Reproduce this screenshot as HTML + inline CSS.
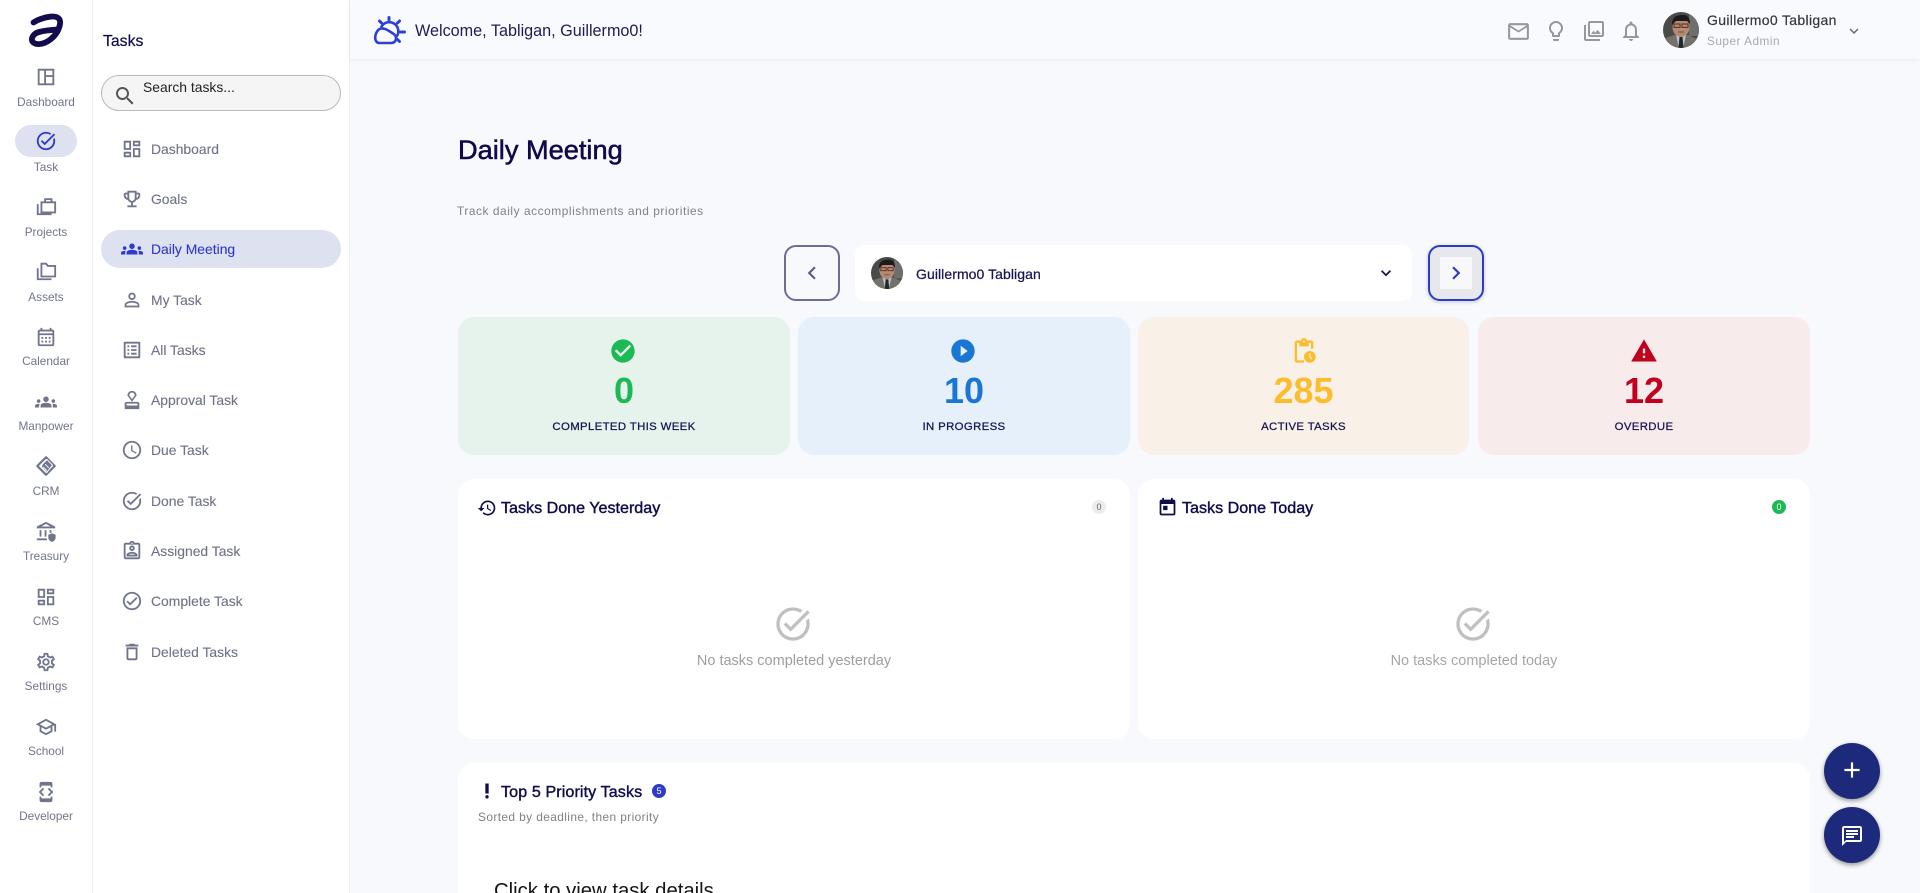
<!DOCTYPE html>
<html lang="en"><head><meta charset="utf-8"><title>Daily Meeting</title>
<style>
html,body{margin:0;padding:0;width:1920px;height:893px;overflow:hidden;background:#f8f9fd;font-family:"Liberation Sans",Arial,sans-serif}
#p{position:relative;width:1920px;height:893px;overflow:hidden}
.a,svg.i,.t{position:absolute}
svg{display:block}
svg.i{fill:currentColor}
.t{white-space:nowrap;line-height:20px;height:20px}
.m{-webkit-text-stroke:.3px currentColor}
.rl{left:0;width:92px;text-align:center;font-size:11.8px;color:#71758a}
.rc{color:#71758b}
.ml{left:151px;font-size:13.9px;color:#6f7388;-webkit-text-stroke:.12px currentColor}
.c{color:#71758b}
.card{position:absolute;top:317px;height:138px;border-radius:16px}
.num{position:absolute;left:0;right:0;top:370px;text-align:center;font-size:36px;line-height:42px;font-weight:bold}
.lab{position:absolute;left:0;right:0;text-align:center;font-size:11.4px;letter-spacing:.35px;line-height:20px;top:417px;color:#17134f;-webkit-text-stroke:.25px #17134f}
.pan{position:absolute;background:#fff;border-radius:16px}
.h{font-size:16.1px;color:#100b4c;-webkit-text-stroke:.4px #100b4c}
</style></head><body><div id="p">
<svg width="0" height="0" style="position:absolute"><defs>
<clipPath id="cc"><circle cx="18" cy="18" r="18"/></clipPath>
<g id="av"><g clip-path="url(#cc)">
<rect width="36" height="36" fill="#4a4a48"/><rect x="26" y="0" width="10" height="24" fill="#6e6e6c"/>
<path d="M0 36V27L11 23H25L36 28V36Z" fill="#74716b"/>
<path d="M13 23H23L20 36H16Z" fill="#b4c4d6"/><path d="M16.5 25H19.5L20.5 36H15.5Z" fill="#262626"/>
<ellipse cx="18" cy="15" rx="8.5" ry="10" fill="#b38a72"/>
<path d="M9 13C9 5 13 3 20 3C26 3 27 8 27 12L24 9H13Z" fill="#1c1a1a"/>
<rect x="11" y="12" width="6" height="3.4" fill="none" stroke="#5a2a22" stroke-width="1"/><rect x="19" y="12" width="6" height="3.4" fill="none" stroke="#5a2a22" stroke-width="1"/>
<path d="M15 20H21" stroke="#7c4c40" stroke-width="1"/></g></g>
<path id="dash" d="M19 5v2h-4V5h4M9 5v6H5V5h4m10 8v6h-4v-6h4M9 17v2H5v-2h4M21 3h-8v6h8V3zM11 3H3v10h8V3zm10 8h-8v10h8V11zm-10 4H3v6h8v-6z"/>
<path id="talt" d="M22 5.18L10.59 16.6l-4.24-4.24 1.41-1.41 2.83 2.83 10-10L22 5.18zm-2.21 5.04c.13.57.21 1.17.21 1.78 0 4.42-3.58 8-8 8s-8-3.58-8-8 3.58-8 8-8c1.58 0 3.04.46 4.28 1.25l1.44-1.44C16.1 2.67 14.13 2 12 2 6.48 2 2 6.48 2 12s4.48 10 10 10 10-4.48 10-10c0-1.19-.22-2.33-.6-3.39l-1.61 1.61z"/>
<path id="grp" d="M12 12.75c1.63 0 3.07.39 4.24.9 1.08.48 1.76 1.56 1.76 2.73V18H6v-1.61c0-1.18.68-2.26 1.76-2.73 1.17-.52 2.61-.91 4.24-.91zM4 13c1.1 0 2-.9 2-2s-.9-2-2-2-2 .9-2 2 .9 2 2 2zm1.13 1.1c-.37-.06-.74-.1-1.13-.1-.99 0-1.93.21-2.78.58C.48 14.9 0 15.62 0 16.43V18h4.5v-1.61c0-.83.23-1.61.63-2.29zM20 13c1.1 0 2-.9 2-2s-.9-2-2-2-2 .9-2 2 .9 2 2 2zm4 3.43c0-.81-.48-1.53-1.22-1.85-.85-.37-1.79-.58-2.78-.58-.39 0-.76.04-1.13.1.4.68.63 1.46.63 2.29V18H24v-1.57zM12 6c1.66 0 3 1.34 3 3s-1.34 3-3 3-3-1.34-3-3 1.34-3 3-3z"/>
<path id="exp" d="M16.59 8.59L12 13.17 7.41 8.59 6 10l6 6 6-6z"/>
</defs></svg>

<!-- rail -->
<div class="a" style="left:0;top:0;width:92px;height:893px;background:#fff;border-right:1px solid #eeeff3"></div>
<div class="a" style="left:93px;top:0;width:256px;height:893px;background:#fff;border-right:1px solid #eeeff3"></div>
<svg class="a" style="left:0;top:1px" width="92" height="56" viewBox="0 0 92 56"><path d="M33.5 21.5C40 17 62 10 60 23C58 35 46 44 37 43C29 42 31 33 39 31C45 29.500 50 29 57 28.500" fill="none" stroke="#120c4f" stroke-width="5.800" stroke-linecap="round"/></svg>
<div class="a" style="left:15px;top:125px;width:62px;height:32px;border-radius:16px;background:#dde1f0"></div>

<svg class="i rc" style="left:35px;top:66px" width="22" height="22" viewBox="0 0 24 24"><path d="M4 4h16v16H4zM11 4v16M11 11h9" fill="none" stroke="currentColor" stroke-width="2"/></svg>
<svg class="i" style="left:35px;top:130px;color:#2e3bc8" width="22" height="22" viewBox="0 0 24 24"><use href="#talt"/></svg>
<svg class="i rc" style="left:35px;top:195px" width="22" height="22" viewBox="0 0 24 24"><path d="M7 8h15v11H7zM11 8V4.500h7V8M3 10v11h15" fill="none" stroke="currentColor" stroke-width="2"/></svg>
<svg class="i rc" style="left:35px;top:260px" width="22" height="22" viewBox="0 0 24 24"><path d="M7 4h5l2 2.500h8V18H7zM3 9v12h15" fill="none" stroke="currentColor" stroke-width="2"/></svg>
<svg class="i rc" style="left:35px;top:326px" width="22" height="22" viewBox="0 0 24 24"><path d="M19 4h-1V2h-2v2H8V2H6v2H5c-1.100 0-2 .9-2 2v14c0 1.100.9 2 2 2h14c1.100 0 2-.9 2-2V6c0-1.100-.9-2-2-2zm0 16H5V10h14v10zM5 8V6h14v2H5zm2 4h2v2H7zm4 0h2v2h-2zm4 0h2v2h-2zM7 16h2v2H7zm4 0h2v2h-2zm4 0h2v2h-2z"/></svg>
<svg class="i rc" style="left:35px;top:391px" width="22" height="22" viewBox="0 0 24 24"><use href="#grp"/></svg>
<svg class="i rc" style="left:35px;top:455px" width="22" height="22" viewBox="0 0 24 24"><path d="M12 2.500L21.500 12 12 21.500 2.500 12z" fill="none" stroke="currentColor" stroke-width="2.400" stroke-linejoin="round"/><path d="M8 10l5-5 6 6-6 8-6-6zM9 13l4 4M11 10l4 4" fill="currentColor" stroke="#fff" stroke-width="1"/></svg>
<svg class="i rc" style="left:35px;top:521px" width="22" height="22" viewBox="0 0 24 24"><path d="M12 1L2 6v2h20V6zm0 2.200L17 6H7zM5 10v7h2v-7zM10.500 10v7h2v-7zM16 10v3h2v-3zM2 19h11v2H2z"/><path d="M18.500 13.500l4 1.500v3.200c0 2.300-1.800 3.900-4 4.800-2.200-.9-4-2.500-4-4.800V15z"/></svg>
<svg class="i rc" style="left:35px;top:586px" width="22" height="22" viewBox="0 0 24 24"><use href="#dash"/></svg>
<svg class="i rc" style="left:35px;top:651px" width="22" height="22" viewBox="0 0 24 24"><path d="M19.430 12.980c.04-.32.07-.64.07-.98 0-.34-.03-.66-.07-.98l2.110-1.650c.19-.15.24-.42.12-.64l-2-3.460c-.09-.16-.26-.25-.44-.25-.06 0-.12.01-.17.03l-2.490 1c-.52-.4-1.080-.73-1.690-.98l-.38-2.650C14.460 2.180 14.250 2 14 2h-4c-.25 0-.46.18-.49.42l-.38 2.650c-.61.25-1.170.59-1.690.98l-2.490-1c-.06-.02-.12-.03-.18-.03-.17 0-.34.09-.43.25l-2 3.460c-.13.22-.07.49.12.64l2.110 1.650c-.04.32-.07.65-.07.98 0 .33.03.66.07.98l-2.110 1.650c-.19.15-.24.42-.12.64l2 3.460c.09.16.26.25.44.25.06 0 .12-.01.17-.03l2.490-1c.52.4 1.080.73 1.690.98l.38 2.650c.03.24.24.42.49.42h4c.25 0 .46-.18.49-.42l.38-2.650c.61-.25 1.170-.59 1.690-.98l2.490 1c.06.02.12.03.18.03.17 0 .34-.09.43-.25l2-3.460c.12-.22.07-.49-.12-.64l-2.110-1.650zm-1.980-1.710c.04.31.05.52.05.73 0 .21-.02.43-.05.73l-.14 1.130.89.7 1.080.84-.7 1.210-1.270-.51-1.040-.42-.9.68c-.43.32-.84.56-1.250.73l-1.060.43-.16 1.130-.2 1.350h-1.400l-.19-1.350-.16-1.130-1.060-.43c-.43-.18-.83-.41-1.230-.71l-.91-.7-1.060.43-1.270.51-.7-1.210 1.080-.84.89-.7-.14-1.130c-.03-.31-.05-.54-.05-.74s.02-.43.05-.73l.14-1.130-.89-.7-1.080-.84.7-1.210 1.270.51 1.040.42.9-.68c.43-.32.84-.56 1.250-.73l1.060-.43.16-1.130.2-1.350h1.390l.19 1.350.16 1.130 1.060.43c.43.18.83.41 1.230.71l.91.7 1.060-.43 1.270-.51.7 1.210-1.070.85-.89.7.14 1.130zM12 8c-2.210 0-4 1.790-4 4s1.790 4 4 4 4-1.790 4-4-1.790-4-4-4zm0 6c-1.100 0-2-.9-2-2s.9-2 2-2 2 .9 2 2-.9 2-2 2z"/></svg>
<svg class="i rc" style="left:35px;top:716px" width="22" height="22" viewBox="0 0 24 24"><path d="M12 3L1 9l4 2.180v6L12 21l7-3.820v-6l2-1.090V17h2V9L12 3zm6.820 6L12 12.720 5.180 9 12 5.280 18.820 9zM17 15.990l-5 2.730-5-2.730v-3.720L12 15l5-2.730v3.720z"/></svg>
<svg class="i rc" style="left:35px;top:781px" width="22" height="22" viewBox="0 0 24 24"><path d="M7 5h10v2h2V3c0-1.100-.9-1.990-2-1.990L7 1c-1.100 0-2 .9-2 2v4h2V5zm8.410 11.590L20 12l-4.590-4.590L14 8.830 17.170 12 14 15.170l1.410 1.420zM10 15.170L6.830 12 10 8.830 8.590 7.410 4 12l4.590 4.590L10 15.170zM17 19H7v-2H5v4c0 1.100.9 2 2 2h10c1.100 0 2-.9 2-2v-4h-2v2z"/></svg>

<div class="t rl" style="top:92px">Dashboard</div>
<div class="t rl" style="top:157px">Task</div>
<div class="t rl" style="top:222px">Projects</div>
<div class="t rl" style="top:287px">Assets</div>
<div class="t rl" style="top:351px">Calendar</div>
<div class="t rl" style="top:416px">Manpower</div>
<div class="t rl" style="top:481px">CRM</div>
<div class="t rl" style="top:546px">Treasury</div>
<div class="t rl" style="top:611px">CMS</div>
<div class="t rl" style="top:676px">Settings</div>
<div class="t rl" style="top:741px">School</div>
<div class="t rl" style="top:806px">Developer</div>

<!-- tasks panel -->
<div class="t m" style="left:103px;top:32px;font-size:15.800px;color:#100b4c;-webkit-text-stroke:.2px #100b4c">Tasks</div>
<div class="a" style="left:101px;top:75px;width:238px;height:34px;border:1px solid #b9b9b9;border-radius:18px;background:#f5f5f5"></div>
<svg class="i" style="left:113px;top:84px;color:#555" width="24" height="24" viewBox="0 0 24 24"><path d="M15.500 14h-.79l-.28-.27C15.410 12.590 16 11.110 16 9.500 16 5.910 13.090 3 9.500 3S3 5.910 3 9.500 5.910 16 9.500 16c1.610 0 3.090-.59 4.230-1.570l.27.28v.79l5 4.990L20.490 19l-4.990-5zm-6 0C7.010 14 5 11.990 5 9.500S7.010 5 9.500 5 14 7.010 14 9.500 11.990 14 9.500 14z"/></svg>
<div class="t" style="left:143px;top:77px;font-size:13.900px;color:#222">Search tasks...</div>

<div class="a" style="left:101px;top:230px;width:240px;height:38px;border-radius:19px;background:#dde1f0"></div>
<svg class="i c" style="left:121px;top:138px" width="22" height="22" viewBox="0 0 24 24"><use href="#dash"/></svg>
<svg class="i c" style="left:121px;top:188px" width="22" height="22" viewBox="0 0 24 24"><path d="M19 5h-2V3H7v2H5c-1.100 0-2 .9-2 2v1c0 2.550 1.920 4.630 4.390 4.940.63 1.500 1.980 2.630 3.610 2.960V19H7v2h10v-2h-4v-3.100c1.630-.33 2.980-1.460 3.610-2.960C19.080 12.630 21 10.550 21 8V7c0-1.100-.9-2-2-2zM5 8V7h2v3.820C5.840 10.400 5 9.300 5 8zm7 6c-1.650 0-3-1.350-3-3V5h6v6c0 1.650-1.350 3-3 3zm7-6c0 1.300-.84 2.400-2 2.820V7h2v1z"/></svg>
<svg class="i" style="left:121px;top:238px;color:#2e3bc8" width="22" height="22" viewBox="0 0 24 24"><use href="#grp"/></svg>
<svg class="i c" style="left:121px;top:289px" width="22" height="22" viewBox="0 0 24 24"><path d="M12 5.900c1.160 0 2.100.94 2.100 2.100s-.94 2.100-2.100 2.100S9.900 9.160 9.900 8s.94-2.100 2.100-2.100m0 9c2.970 0 6.100 1.460 6.100 2.100v1.100H5.900V17c0-.64 3.130-2.100 6.100-2.100M12 4C9.790 4 8 5.790 8 8s1.790 4 4 4 4-1.790 4-4-1.790-4-4-4zm0 9c-2.670 0-8 1.340-8 4v3h16v-3c0-2.660-5.330-4-8-4z"/></svg>
<svg class="i c" style="left:121px;top:339px" width="22" height="22" viewBox="0 0 24 24"><path d="M19 5v14H5V5h14m1.100-2H3.900c-.5 0-.9.4-.9.9v16.200c0 .4.4.9.9.9h16.200c.4 0 .9-.5.9-.9V3.900c0-.5-.5-.9-.9-.9zM11 7h6v2h-6V7zm0 4h6v2h-6v-2zm0 4h6v2h-6zM7 7h2v2H7zm0 4h2v2H7zm0 4h2v2H7z"/></svg>
<svg class="i c" style="left:121px;top:389px" width="22" height="22" viewBox="0 0 24 24"><path d="M4 16v6h16v-6c0-1.100-.9-2-2-2H6c-1.100 0-2 .9-2 2zm14 2H6v-2h12v2zM12 2C9.240 2 7 4.240 7 7l5 7 5-7c0-2.760-2.240-5-5-5zm0 9L9 7c0-1.660 1.340-3 3-3s3 1.340 3 3l-3 4z"/></svg>
<svg class="i c" style="left:121px;top:439px" width="22" height="22" viewBox="0 0 24 24"><path d="M11.990 2C6.470 2 2 6.480 2 12s4.470 10 9.990 10C17.520 22 22 17.520 22 12S17.520 2 11.990 2zM12 20c-4.420 0-8-3.580-8-8s3.580-8 8-8 8 3.580 8 8-3.580 8-8 8zm.5-13H11v6l5.250 3.150.75-1.230-4.500-2.670z"/></svg>
<svg class="i c" style="left:121px;top:490px" width="22" height="22" viewBox="0 0 24 24"><use href="#talt"/></svg>
<svg class="i c" style="left:121px;top:540px" width="22" height="22" viewBox="0 0 24 24"><path d="M19 3h-4.180C14.400 1.840 13.300 1 12 1c-1.300 0-2.400.84-2.820 2H5c-1.100 0-2 .9-2 2v14c0 1.100.9 2 2 2h14c1.100 0 2-.9 2-2V5c0-1.100-.9-2-2-2zm-7-.25c.41 0 .75.34.75.75s-.34.75-.75.75-.75-.34-.75-.75.34-.75.75-.75zM19 19H5V5h14v14zm-7-7c1.650 0 3-1.350 3-3s-1.350-3-3-3-3 1.350-3 3 1.350 3 3 3zm0-4c.55 0 1 .45 1 1s-.45 1-1 1-1-.45-1-1 .45-1 1-1zm6 8.470c0-2.500-3.970-3.580-6-3.580s-6 1.070-6 3.580V18h12v-1.530zM8.310 16c.69-.56 2.380-1.120 3.690-1.120s3.010.56 3.690 1.120H8.310z"/></svg>
<svg class="i c" style="left:121px;top:590px" width="22" height="22" viewBox="0 0 24 24"><path d="M12 2C6.480 2 2 6.480 2 12s4.480 10 10 10 10-4.480 10-10S17.520 2 12 2zm0 18c-4.410 0-8-3.590-8-8s3.590-8 8-8 8 3.590 8 8-3.590 8-8 8zm4.590-12.420L10 14.170l-2.590-2.580L6 13l4 4 8-8z"/></svg>
<svg class="i c" style="left:121px;top:641px" width="22" height="22" viewBox="0 0 24 24"><path d="M6 19c0 1.100.9 2 2 2h8c1.100 0 2-.9 2-2V7H6v12zM8 9h8v10H8V9zm7.500-5l-1-1h-5l-1 1H5v2h14V4z"/></svg>

<div class="t ml" style="top:139px">Dashboard</div>
<div class="t ml" style="top:189px">Goals</div>
<div class="t ml" style="top:239px;color:#2e3bc8">Daily Meeting</div>
<div class="t ml" style="top:290px">My Task</div>
<div class="t ml" style="top:340px">All Tasks</div>
<div class="t ml" style="top:390px">Approval Task</div>
<div class="t ml" style="top:440px">Due Task</div>
<div class="t ml" style="top:491px">Done Task</div>
<div class="t ml" style="top:541px">Assigned Task</div>
<div class="t ml" style="top:591px">Complete Task</div>
<div class="t ml" style="top:642px">Deleted Tasks</div>

<!-- header -->
<div class="a" style="left:350px;top:0;width:1570px;height:59px;background:#f9fafe;box-shadow:0 1px 4px rgba(0,0,0,.07)"></div>
<svg class="a" style="left:372px;top:14px" width="36" height="32" viewBox="372 14 36 32"><g fill="none" stroke="#2c40d2" stroke-linecap="round" stroke-linejoin="round"><path stroke-width="3" d="M389 17.500V20M379.500 21L381.500 23M399.500 21L397.500 23M400.500 32H404.500M397.500 39.500L399.500 41.500"/><path stroke-width="2.600" d="M381.500 26.500A9 9 0 0 1 397 36"/><path stroke-width="2.600" d="M379 43H391C397 43 397.500 36 393 33.500C389 31 385.500 28 381 28.500C374.500 30 373 42.500 379 43Z"/></g></svg>
<div class="t" style="left:415px;top:21px;font-size:16.200px;color:#1f1b55">Welcome, Tabligan, Guillermo0!</div>

<svg class="i" style="left:1506px;top:19px;color:#98989c" width="25" height="25" viewBox="0 0 24 24"><path d="M20 4H4c-1.100 0-1.990.9-1.990 2L2 18c0 1.100.9 2 2 2h16c1.100 0 2-.9 2-2V6c0-1.100-.9-2-2-2zm0 14H4V8l8 5 8-5v10zm-8-7L4 6h16l-8 5z"/></svg>
<svg class="i" style="left:1544px;top:19px;color:#98989c" width="24" height="24" viewBox="0 0 24 24"><path d="M9 21c0 .55.45 1 1 1h4c.55 0 1-.45 1-1v-1H9v1zm3-19C8.140 2 5 5.140 5 9c0 2.380 1.190 4.470 3 5.740V17c0 .55.45 1 1 1h6c.55 0 1-.45 1-1v-2.260c1.810-1.270 3-3.360 3-5.740 0-3.860-3.140-7-7-7zm2.850 11.100l-.85.6V16h-4v-2.300l-.85-.6C7.800 12.160 7 10.630 7 9c0-2.760 2.240-5 5-5s5 2.240 5 5c0 1.630-.8 3.160-2.150 4.100z"/></svg>
<svg class="i" style="left:1582px;top:19px;color:#98989c" width="24" height="24" viewBox="0 0 24 24"><path d="M20 4v12H8V4h12m0-2H8c-1.100 0-2 .9-2 2v12c0 1.100.9 2 2 2h12c1.100 0 2-.9 2-2V4c0-1.100-.9-2-2-2zm-8.500 9.670l1.690 2.260 2.480-3.100L19 15H9zM2 6v14c0 1.100.9 2 2 2h14v-2H4V6H2z"/></svg>
<svg class="i" style="left:1619px;top:19px;color:#98989c" width="24" height="24" viewBox="0 0 24 24"><path d="M12 22c1.100 0 2-.9 2-2h-4c0 1.100.9 2 2 2zm6-6v-5c0-3.070-1.630-5.640-4.500-6.320V4c0-.83-.67-1.500-1.500-1.500s-1.500.67-1.500 1.500v.68C7.640 5.360 6 7.920 6 11v5l-2 2v1h16v-1l-2-2zm-2 1H8v-6c0-2.480 1.510-4.500 4-4.500s4 2.020 4 4.500v6z"/></svg>
<svg class="a" style="left:1663px;top:12px" width="36" height="36" viewBox="0 0 36 36"><use href="#av"/></svg>
<div class="t m" style="left:1707px;top:10px;font-size:14px;letter-spacing:.33px;color:#36363c;-webkit-text-stroke:.2px #36363c">Guillermo0 Tabligan</div>
<div class="t" style="left:1707px;top:31px;font-size:11.800px;color:#a9a9ad;letter-spacing:.5px">Super Admin</div>
<svg class="i" style="left:1845px;top:22px;color:#6a6a70" width="18" height="18" viewBox="0 0 24 24"><use href="#exp"/></svg>

<!-- title -->
<div class="t m" style="left:458px;top:140px;font-size:27.200px;color:#0f0a4a;-webkit-text-stroke:.55px #0f0a4a">Daily Meeting</div>
<div class="t" style="left:457px;top:201px;font-size:11.900px;color:#808085;letter-spacing:.55px">Track daily accomplishments and priorities</div>

<!-- selector -->
<div class="a" style="left:784px;top:245px;width:52px;height:52px;border:2px solid #6f6a9a;border-radius:12px"></div>
<svg class="i" style="left:799px;top:260px;color:#5c5c8c" width="26" height="26" viewBox="0 0 24 24"><path d="M15.410 7.410L14 6l-6 6 6 6 1.410-1.410L10.830 12z"/></svg>
<div class="a" style="left:855px;top:245px;width:557px;height:56px;background:#fff;border-radius:10px"></div>
<svg class="a" style="left:871px;top:257px" width="32" height="32" viewBox="0 0 36 36"><use href="#av"/></svg>
<div class="t m" style="left:916px;top:264px;font-size:14px;letter-spacing:.07px;color:#1a1555;-webkit-text-stroke:.25px #1a1555">Guillermo0 Tabligan</div>
<svg class="i" style="left:1376px;top:263px;color:#100b4c" width="20" height="20" viewBox="0 0 24 24"><use href="#exp"/></svg>
<div class="a" style="left:1428px;top:245px;width:52px;height:52px;border:2px solid #2e3bc8;border-radius:12px;background:#e7e8ec;box-shadow:0 1px 4px rgba(0,0,0,.2)"></div>
<div class="a" style="left:1440px;top:257px;width:32px;height:32px;background:#f8f8fb"></div>
<svg class="i" style="left:1443px;top:260px;color:#2e3bc8" width="26" height="26" viewBox="0 0 24 24"><path d="M10 6L8.590 7.410 13.170 12l-4.580 4.590L10 18l6-6z"/></svg>

<!-- stats -->
<div class="card" style="left:458px;width:332px;background:#e6f2ec"></div>
<div class="card" style="left:798px;width:332px;background:#e5f0fa"></div>
<div class="card" style="left:1138px;width:331px;background:#f9f0e7"></div>
<div class="card" style="left:1478px;width:332px;background:#f7ebeb"></div>
<svg class="i" style="left:609px;top:337px;color:#1db954" width="28" height="28" viewBox="0 0 24 24"><path d="M12 2C6.480 2 2 6.480 2 12s4.480 10 10 10 10-4.480 10-10S17.520 2 12 2zm-2 15l-5-5 1.410-1.410L10 14.170l7.590-7.590L19 8l-9 9z"/></svg>
<svg class="i" style="left:949px;top:337px;color:#1976d2" width="28" height="28" viewBox="0 0 24 24"><path d="M12 2C6.480 2 2 6.480 2 12s4.480 10 10 10 10-4.480 10-10S17.520 2 12 2zm-2 14.500v-9l6 4.500-6 4.500z"/></svg>
<svg class="i" style="left:1290px;top:337px;color:#fbbc2e" width="28" height="28" viewBox="0 0 24 24"><path d="M17 12c-2.760 0-5 2.240-5 5s2.240 5 5 5 5-2.240 5-5-2.240-5-5-5zm1.650 7.350L16.500 17.200V14h1v2.790l1.850 1.850-.7.710zM18 3h-3.180C14.400 1.840 13.300 1 12 1s-2.400.84-2.820 2H6c-1.100 0-2 .9-2 2v15c0 1.100.9 2 2 2h6v-2H6V5h2v3h8V5h2v5h2V5c0-1.100-.9-2-2-2zm-6 2c-.55 0-1-.45-1-1s.45-1 1-1 1 .45 1 1-.45 1-1 1z"/></svg>
<svg class="i" style="left:1630px;top:337px;color:#c0001d" width="28" height="28" viewBox="0 0 24 24"><path d="M1 21h22L12 2 1 21zm12-3h-2v-2h2v2zm0-4h-2v-4h2v4z"/></svg>
<div class="num" style="left:458px;right:auto;width:332px;color:#1db954">0</div>
<div class="num" style="left:798px;right:auto;width:332px;color:#1976d2">10</div>
<div class="num" style="left:1138px;right:auto;width:331px;color:#fbbc2e">285</div>
<div class="num" style="left:1478px;right:auto;width:332px;color:#c0001d">12</div>
<div class="lab" style="left:458px;right:auto;width:332px">COMPLETED THIS WEEK</div>
<div class="lab" style="left:798px;right:auto;width:332px">IN PROGRESS</div>
<div class="lab" style="left:1138px;right:auto;width:331px">ACTIVE TASKS</div>
<div class="lab" style="left:1478px;right:auto;width:332px">OVERDUE</div>

<!-- panels -->
<div class="pan" style="left:458px;top:479px;width:672px;height:260px"></div>
<div class="pan" style="left:1138px;top:479px;width:672px;height:260px"></div>
<div class="pan" style="left:458px;top:763px;width:1352px;height:160px"></div>

<svg class="i" style="left:477px;top:498px;color:#100b4c" width="20" height="20" viewBox="0 0 24 24"><path d="M13 3c-4.970 0-9 4.030-9 9H1l3.890 3.890.07.140L9 12H6c0-3.870 3.130-7 7-7s7 3.130 7 7-3.130 7-7 7c-1.930 0-3.680-.79-4.940-2.060l-1.420 1.420C8.270 19.990 10.510 21 13 21c4.970 0 9-4.030 9-9s-4.030-9-9-9zm-1 5v5l4.280 2.540.72-1.210-3.500-2.080V8H12z"/></svg>
<div class="t h" style="left:501px;top:498px">Tasks Done Yesterday</div>
<div class="a" style="left:1092px;top:500px;width:14px;height:14px;border-radius:7px;background:#ececec;color:#666;font-size:9px;line-height:14px;text-align:center">0</div>
<svg class="i" style="left:773px;top:604px;color:#c0c0c0" width="40" height="40" viewBox="0 0 24 24"><use href="#talt"/></svg>
<div class="t" style="left:458px;width:672px;text-align:center;top:651px;font-size:14.500px;color:#9e9e9e">No tasks completed yesterday</div>

<svg class="i" style="left:1157px;top:497px;color:#100b4c" width="21" height="21" viewBox="0 0 24 24"><path d="M19 3h-1V1h-2v2H8V1H6v2H5c-1.110 0-1.990.9-1.990 2L3 19c0 1.100.89 2 2 2h14c1.100 0 2-.9 2-2V5c0-1.100-.9-2-2-2zm0 16H5V8h14v11zM7 10h5v5H7z"/></svg>
<div class="t h" style="left:1182px;top:498px">Tasks Done Today</div>
<div class="a" style="left:1772px;top:500px;width:14px;height:14px;border-radius:7px;background:#1db954;color:#fff;font-size:9px;line-height:14px;text-align:center">0</div>
<svg class="i" style="left:1453px;top:604px;color:#c0c0c0" width="40" height="40" viewBox="0 0 24 24"><use href="#talt"/></svg>
<div class="t" style="left:1138px;width:672px;text-align:center;top:651px;font-size:14.500px;color:#a6a6a6">No tasks completed today</div>

<svg class="i" style="left:477px;top:781px;color:#100b4c" width="20" height="20" viewBox="0 0 24 24"><circle cx="12" cy="19" r="2"/><path d="M10 3h4v12h-4z"/></svg>
<div class="t h" style="left:501px;top:782px;letter-spacing:.1px">Top 5 Priority Tasks</div>
<div class="a" style="left:652px;top:784px;width:14px;height:14px;border-radius:7px;background:#2e3bc8;color:#fff;font-size:9px;line-height:14px;text-align:center">5</div>
<div class="t" style="left:478px;top:807px;font-size:11.900px;color:#808085;letter-spacing:.4px">Sorted by deadline, then priority</div>
<div class="t" style="left:494px;top:879px;font-size:20.300px;line-height:24px;height:24px;color:#151515">Click to view task details</div>

<!-- fab -->
<div class="a" style="left:1824px;top:743px;width:56px;height:56px;border-radius:50%;background:#1d2a7b;box-shadow:0 2px 5px rgba(0,0,0,.4)"></div>
<svg class="i" style="left:1839px;top:757px;color:#fff" width="26" height="26" viewBox="0 0 24 24"><path d="M19 13h-6v6h-2v-6H5v-2h6V5h2v6h6v2z"/></svg>
<div class="a" style="left:1824px;top:807px;width:56px;height:56px;border-radius:50%;background:#1d2a7b;box-shadow:0 2px 5px rgba(0,0,0,.4)"></div>
<svg class="i" style="left:1840px;top:824px;color:#fff" width="24" height="24" viewBox="0 0 24 24"><path d="M20 2H4c-1.100 0-2 .9-2 2v18l4-4h14c1.100 0 2-.9 2-2V4c0-1.100-.9-2-2-2zm0 14H6l-2 2V4h16v12zM6 12h8v2H6zM6 9h12v2H6zM6 6h12v2H6z"/></svg>
</div></body></html>
